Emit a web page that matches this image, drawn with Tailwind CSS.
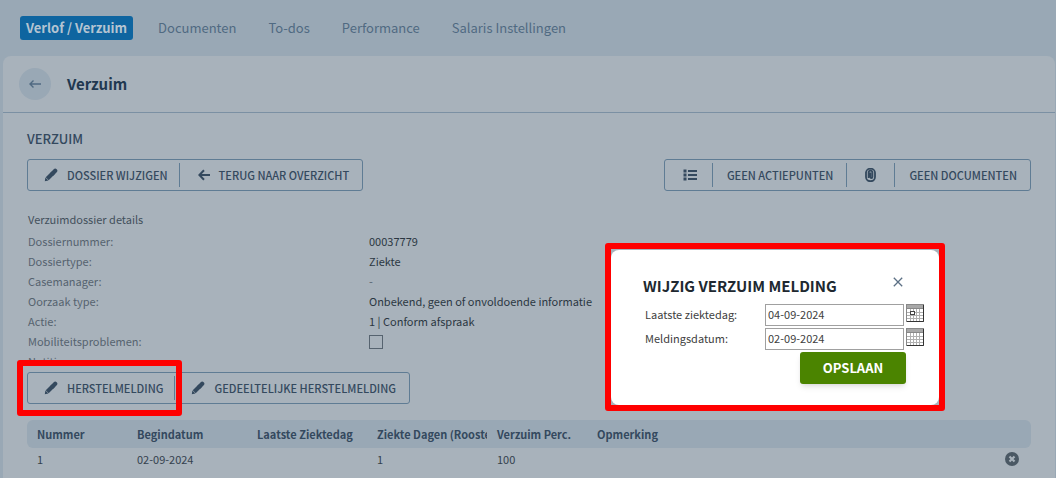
<!DOCTYPE html>
<html lang="nl">

<head>
  <meta charset="UTF-8" />
  <meta name="viewport" content="width=device-width, initial-scale=1" />
  <title>Verzuim</title>
  <script src="https://cdn.jsdelivr.net/npm/@tailwindcss/browser@4"></script>
</head>

<body class="bg-[#99a8b5] min-h-screen flex flex-col overflow-hidden font-['Noto_Sans_CJK_SC','Noto_Sans',sans-serif] text-[11px] text-[#34414e]">

  <!-- Icons -->
  <svg class="hidden" aria-hidden="true">
    <symbol id="pencil" viewBox="0 0 14 14">
      <path d="M3.2 10.8 L9 5" stroke="currentColor" stroke-width="4.2" fill="none" />
      <path d="M8.600 5.400 L11.200 2.800" stroke="currentColor" stroke-width="4.2" stroke-linecap="round" fill="none" />
      <path d="M1.4 9.6 L4.4 12.6 L.8 13.3 Z" fill="currentColor" />
    </symbol>
    <symbol id="calendar" viewBox="0 0 18 18">
      <rect x=".5" y=".5" width="17" height="17" fill="#fff" stroke="#888" />
      <rect x="1" y="1" width="16" height="3" fill="#a8a8a8" />
      <path d="M1 4.5h16" stroke="#888" />
      <path d="M1 8.5h16M1 11.5h16M1 14.5h16M4.5 5v12M7.5 5v12M10.5 5v12M13.5 5v12" stroke="#b0b0b0" />
      <path d="M17.5 1v16.500H1" fill="none" stroke="#333" />
    </symbol>
  </svg>

  <!-- Main navigation -->
  <nav class="flex items-center h-14 pl-5 gap-[18px] text-[13px] text-[#506a82]">
    <a href="#" class="bg-[#0f65a0] text-[#b4c4d2] font-bold rounded-[3px] px-[6px] h-6 leading-6">Verlof / Verzuim</a>
    <a href="#" class="h-6 leading-6 px-[7px]">Documenten</a>
    <a href="#" class="h-6 leading-6 px-[7px]">To-dos</a>
    <a href="#" class="h-6 leading-6 px-[7px]">Performance</a>
    <a href="#" class="h-6 leading-6 px-[7px]">Salaris Instellingen</a>
  </nav>

  <div class="bg-[#a8b2bb] rounded-t-lg flex-grow ml-[3px] mr-px">
    <!-- Page header -->
    <header class="flex items-center gap-4 h-[57px] pl-4 border-b border-[#7b90a3]">
      <button aria-label="Terug" class="w-8 h-8 rounded-full bg-[#99a8b5] text-[#506a82] flex items-center justify-center">
        <svg class="w-3 h-3" fill="none" stroke="currentColor" stroke-width="1.4" viewBox="0 0 12 12">
          <path d="M12 6H1M4.500 2.500L1 6l3.500 3.500" />
        </svg>
      </button>
      <h1 class="text-[15px] font-bold text-[#203850]">Verzuim</h1>
    </header>

    <main class="px-6">
      <h2 class="pt-4 text-[13px] leading-5 font-medium text-[#34495e]">VERZUIM</h2>

      <!-- Toolbar -->
      <div class="mt-[10px] flex justify-between font-medium text-[#34495e]">
        <div class="flex items-center h-8 border border-[#5f7c94] rounded-[3px]">
          <button class="flex items-center h-6 gap-[9px] pl-4 pr-[11px] border-r border-[#5f7c94]">
            <svg class="w-[14px] h-[14px]"><use href="#pencil" /></svg>
            DOSSIER WIJZIGEN
          </button>
          <button class="flex items-center h-6 gap-[9px] pl-[18px] pr-[13px]">
            <svg class="w-3 h-3" fill="none" stroke="currentColor" stroke-width="2" viewBox="0 0 12 12">
              <path d="M12 6H1.500M6 1.200L1.400 6L6 10.800" />
            </svg>
            TERUG NAAR OVERZICHT
          </button>
        </div>
        <div class="flex items-center h-8 border border-[#5f7c94] rounded-[3px]">
          <button aria-label="Actiepunten" class="flex items-center h-6 pl-[18px] pr-[15px] border-r border-[#5f7c94]">
            <svg class="w-[14px] h-3" fill="none" stroke="currentColor" stroke-width="2" viewBox="0 0 14 12">
              <path d="M5 2h9M5 6h9M5 10h9" />
              <path d="M.5 2h3M.5 6h3M.5 10h3" stroke-width="3" />
            </svg>
          </button>
          <button class="h-6 pl-[14px] pr-[13px] border-r border-[#5f7c94]">GEEN ACTIEPUNTEN</button>
          <button aria-label="Bijlagen" class="flex items-center h-6 px-[18px] border-r border-[#5f7c94]">
            <svg class="w-[11px] h-[14px]" fill="none" stroke="currentColor" stroke-width="1.800" viewBox="0 0 11 14">
              <path d="M3.600 10V4.500a1.900 1.900 0 0 1 3.800 0V9a1 1 0 0 1-2 0V4.500M1 4.800a4.200 3.900 0 0 1 9 0V9a4.500 4.200 0 0 1-9 0V4" />
            </svg>
          </button>
          <button class="h-6 pl-[14px] pr-[13px]">GEEN DOCUMENTEN</button>
        </div>
      </div>

      <!-- Dossier details -->
      <h3 class="mt-[18px] pl-px leading-5 text-[#43505c]">Verzuimdossier details</h3>
      <div class="mt-[2px] h-[134px] overflow-hidden pl-px leading-5">
        <dl class="grid grid-cols-[341px_1fr] text-[#2b3742]">
          <dt class="text-[#56636f]">Dossiernummer:</dt>
          <dd>00037779</dd>
          <dt class="text-[#56636f]">Dossiertype:</dt>
          <dd>Ziekte</dd>
          <dt class="text-[#56636f]">Casemanager:</dt>
          <dd class="text-[#56636f]">-</dd>
          <dt class="text-[#56636f]">Oorzaak type:</dt>
          <dd>Onbekend, geen of onvoldoende informatie</dd>
          <dt class="text-[#56636f]">Actie:</dt>
          <dd>1 | Conform afspraak</dd>
          <dt class="text-[#56636f]"><label for="mobiliteit">Mobiliteitsproblemen:</label></dt>
          <dd class="flex items-end pb-[2px]">
            <input type="checkbox" id="mobiliteit" class="appearance-none w-[14px] h-[14px] border border-[#56636f]" />
          </dd>
          <dt class="text-[#56636f]">Notitie:</dt>
          <dd></dd>
        </dl>
      </div>

      <div class="mt-[7px] flex font-medium text-[#34495e]">
        <div class="flex items-center h-8 border border-[#5f7c94] rounded-[3px]">
          <div class="relative">
            <button class="flex items-center h-6 gap-[9px] pl-4 pr-[11px] border-r border-[#5f7c94]">
              <svg class="w-[14px] h-[14px]"><use href="#pencil" /></svg>
              HERSTELMELDING
            </button>
            <span class="absolute -left-[11px] -right-[7px] -top-4 -bottom-4 border-6 border-[#ff0000] rounded-[3px] pointer-events-none"></span>
          </div>
          <button class="flex items-center h-6 gap-[9px] pl-4 pr-[13px]">
            <svg class="w-[14px] h-[14px]"><use href="#pencil" /></svg>
            GEDEELTELIJKE HERSTELMELDING
          </button>
        </div>
      </div>

      <!-- Meldingen -->
      <table class="mt-4 w-full table-fixed text-left">
        <thead class="text-[#34495e]">
          <tr class="h-7 bg-[#99a8b5]">
            <th class="w-[100px] pl-[10px] font-bold rounded-l-md">Nummer</th>
            <th class="w-[120px] pl-[10px] font-bold">Begindatum</th>
            <th class="w-[120px] pl-[10px] font-bold whitespace-nowrap">Laatste Ziektedag</th>
            <th class="w-[120px] pl-[10px] font-bold"><div class="overflow-hidden whitespace-nowrap">Ziekte Dagen (Rooster)</div></th>
            <th class="w-[100px] pl-[10px] font-bold whitespace-nowrap">Verzuim Perc.</th>
            <th class="pl-[10px] font-bold">Opmerking</th>
            <th class="w-10 rounded-r-md"></th>
          </tr>
        </thead>
        <tbody>
          <tr class="h-[22px]">
            <td class="pl-[10px]">1</td>
            <td class="pl-[10px]">02-09-2024</td>
            <td></td>
            <td class="pl-[10px]">1</td>
            <td class="pl-[10px]">100</td>
            <td></td>
            <td>
              <button aria-label="Verwijderen" class="flex ml-[14px] text-[#4a5864]">
                <svg class="w-[14px] h-[14px]" viewBox="0 0 14 14">
                  <circle cx="7" cy="7" r="7" fill="currentColor" />
                  <path d="M4.500 4.500l5 5M9.500 4.500l-5 5" stroke="#a8b2bb" stroke-width="2.200" />
                </svg>
              </button>
            </td>
          </tr>
        </tbody>
      </table>
    </main>
  </div>

  <!-- Dialog -->
  <div class="absolute left-[605px] top-[243px] w-[340px] border-6 border-[#ff0000] rounded-[3px] bg-[#a8b2bb]">
    <form role="dialog" aria-labelledby="dialogTitle" class="bg-white rounded-lg mt-px h-[155px] pl-8 pr-[14px] pt-6 text-[#404040]"
      onsubmit="event.preventDefault();">
      <div class="flex justify-between pr-[22px]">
        <h2 id="dialogTitle" class="text-[15px] leading-6 font-bold text-[#202830]">WIJZIG VERZUIM MELDING</h2>
        <button type="button" aria-label="Sluiten" class="h-4 text-[#5c7085]">
          <svg class="w-[10px] h-[10px]" fill="none" stroke="currentColor" stroke-width="1.300" viewBox="0 0 10 10">
            <path d="M.8.8l8.400 8.400M9.200.8L.8 9.200" />
          </svg>
        </button>
      </div>
      <div class="mt-[6px] flex items-start">
        <label for="ziektedag" class="w-[122px] pl-[2px] leading-5">Laatste ziektedag:</label>
        <input type="text" id="ziektedag" value="04-09-2024" class="w-[139px] h-[22px] px-[2px] pb-[2px] border border-[#a0a0a0]" />
        <button type="button" aria-label="Kies laatste ziektedag" class="ml-[2px]">
          <svg class="w-[18px] h-[18px]" viewBox="0 0 18 18">
            <use href="#calendar" />
            <rect x="4.500" y="7.500" width="4" height="3" fill="#fff" stroke="#444" />
          </svg>
        </button>
      </div>
      <div class="mt-[2px] flex items-start">
        <label for="meldingsdatum" class="w-[122px] pl-[2px] leading-5">Meldingsdatum:</label>
        <input type="text" id="meldingsdatum" value="02-09-2024" class="w-[139px] h-[22px] px-[2px] pb-[2px] border border-[#a0a0a0]" />
        <button type="button" aria-label="Kies meldingsdatum" class="ml-[2px]">
          <svg class="w-[18px] h-[18px]" viewBox="0 0 18 18"><use href="#calendar" /></svg>
        </button>
      </div>
      <div class="mt-[2px] flex justify-end pr-[19px]">
        <button type="submit" class="bg-[#4b8400] text-white text-[13px] font-bold w-[106px] h-8 rounded-[3px] shadow-md">OPSLAAN</button>
      </div>
    </form>
  </div>

</body>

</html>
